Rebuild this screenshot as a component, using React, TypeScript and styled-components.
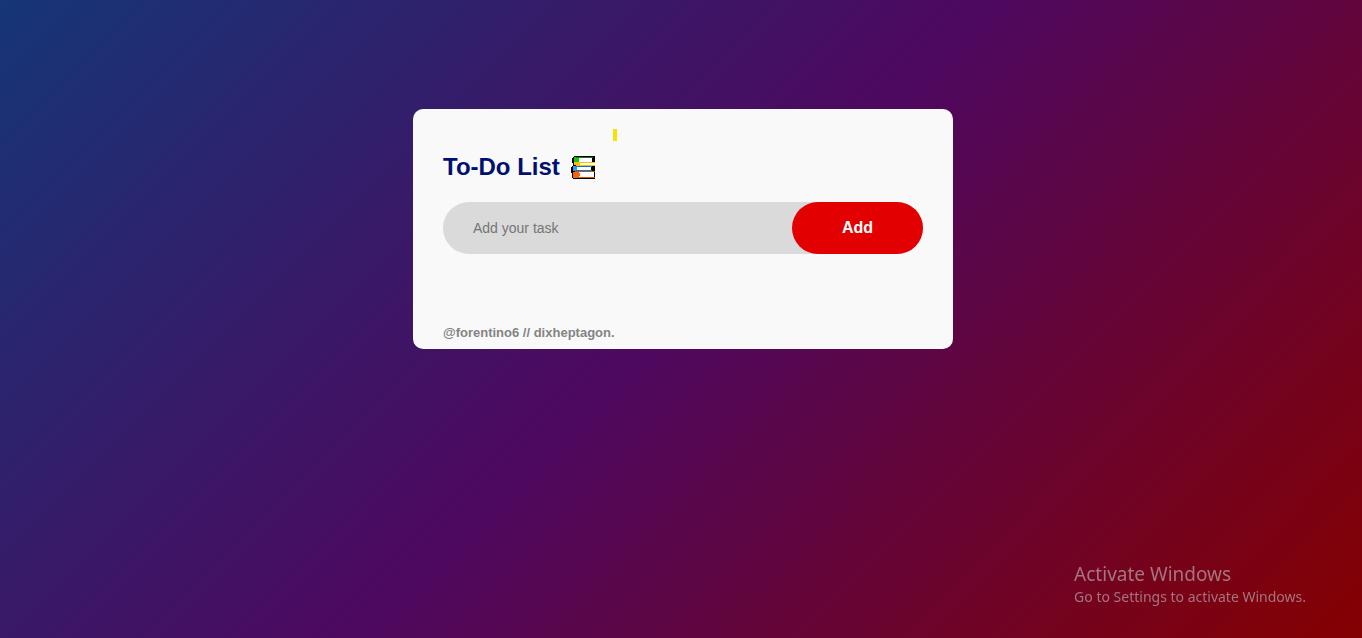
import React from 'react';
import styled, { createGlobalStyle } from 'styled-components';

const GlobalStyle = createGlobalStyle`
  * { margin: 0; padding: 0; box-sizing: border-box; font-family: "Liberation Sans", Arial, sans-serif; }
`;

const Page = styled.main`
  width: 100%;
  min-height: 100vh;
  padding: 10px 10px 10px 14px;
  overflow: hidden;
  background: linear-gradient(135deg, #153677, #4e085f 50%, #850000);
`;

const Card = styled.section`
  max-width: 540px;
  margin: 99px auto 20px;
  padding: 40px 30px 8px;
  border-radius: 10px;
  background: #f9f9f9;
  position: relative;
`;

const Marker = styled.span`
  position: absolute;
  top: 20px;
  left: 200px;
  width: 4px;
  height: 12px;
  background: #f9e000;
`;

const Title = styled.h2`
  display: flex;
  align-items: center;
  gap: 10px;
  height: 36px;
  margin-bottom: 17px;
  color: #00106e;
  font-size: 24px;
`;

const Row = styled.form`
  display: flex;
  margin-bottom: 70px;
  border-radius: 30px;
  background: #dadada;
`;

const TaskInput = styled.input`
  flex: 1;
  min-width: 0;
  padding: 10px 10px 10px 30px;
  border: none;
  outline: none;
  background: transparent;
  font-size: 14px;
  &::placeholder { color: #757575; }
`;

const AddButton = styled.button`
  padding: 16px 50px;
  border: none;
  border-radius: 40px;
  background: #e30000;
  color: #fff;
  font-size: 16px;
  line-height: 20px;
  font-weight: bold;
`;

const Credit = styled.p`
  color: #848484;
  font-size: 13px;
  line-height: 17px;
  font-weight: bold;
`;

const Watermark = styled.aside`
  position: fixed;
  right: 56px;
  bottom: 31px;
  color: #a67480;
`;

const WatermarkLine = styled.p<{ $large?: boolean }>`
  font-family: "Noto Sans", "Open Sans", sans-serif;
  font-size: ${(p) => (p.$large ? 19 : 14)}px;
  line-height: ${(p) => (p.$large ? 26 : 20)}px;
`;

const Books = () => (
  <svg width="25" height="24" viewBox="-1 -1 25 24" shapeRendering="crispEdges" aria-hidden="true">
    <path fill="#000" d="M3 0h21v23H2v-1H1v-5H0v-6h1v-1h1V7H1V2h1V1h1z" />
    <path fill="#16c60c" d="M3 1h5v5H3z" />
    <path fill="#107c10" d="M5 1h17v1H5z" />
    <path fill="#fff" d="M8 2h13v4H8zM9 7h15v2H9zM6 11h14v3H6zM8 16h15v5H8z" />
    <path fill="#ffb900" d="M3 6h6v3H3zM7 6h17v1H7zM5 9h19v1H5z" />
    <path fill="#3a96dd" d="M2 10h4v5H2z" />
    <path fill="#0078d7" d="M5 10h16v1H5zM5 14h16v1H5z" />
    <path fill="#f7630c" d="M2 16h6v6H2zM8 17h1v3H8z" />
    <path fill="#ca5010" d="M4 15h20v1H4zM7 21h17v1H7z" />
  </svg>
);

export default function App() {
  return (
    <Page>
      <GlobalStyle />
      <Card>
        <Marker />
        <Title>To-Do List <Books /></Title>
        <Row>
          <TaskInput placeholder="Add your task" aria-label="Add your task" />
          <AddButton type="button">Add</AddButton>
        </Row>
        <Credit>@forentino6 // dixheptagon.</Credit>
      </Card>
      <Watermark>
        <WatermarkLine $large>Activate Windows</WatermarkLine>
        <WatermarkLine>Go to Settings to activate Windows.</WatermarkLine>
      </Watermark>
    </Page>
  );
}
